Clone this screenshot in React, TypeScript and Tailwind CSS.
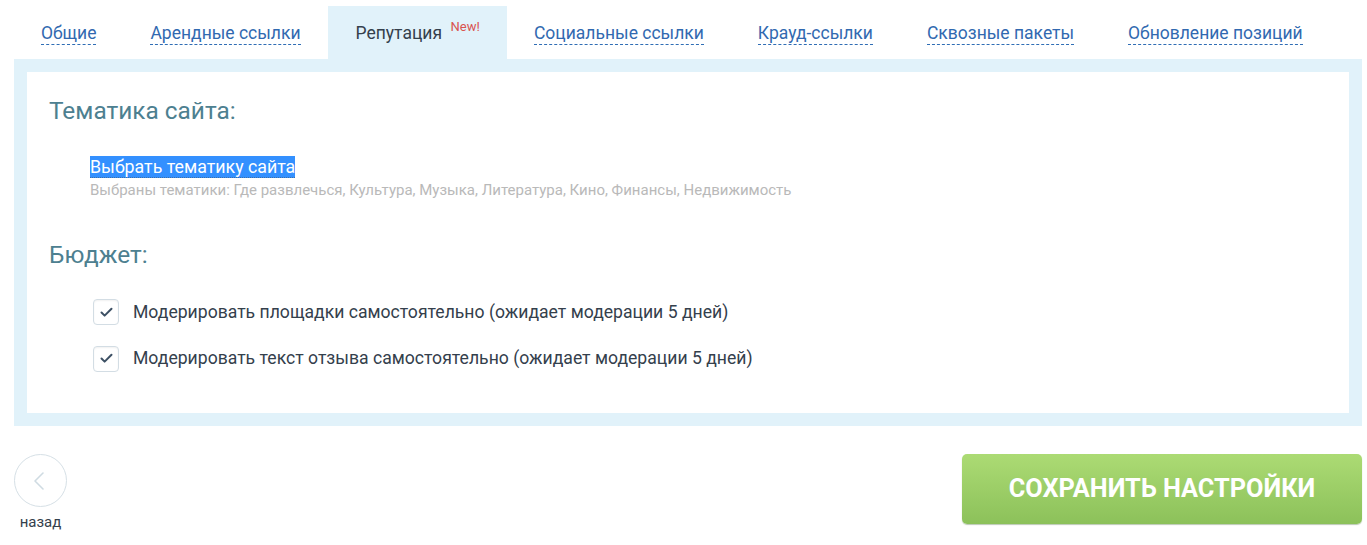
import { Check, ChevronLeft } from 'lucide-react';

const tabs = [
  { label: 'Общие' },
  { label: 'Арендные ссылки' },
  { label: 'Репутация', active: true },
  { label: 'Социальные ссылки' },
  { label: 'Крауд-ссылки' },
  { label: 'Сквозные пакеты' },
  { label: 'Обновление позиций' },
];

const options = [
  'Модерировать площадки самостоятельно (ожидает модерации 5 дней)',
  'Модерировать текст отзыва самостоятельно (ожидает модерации 5 дней)',
];

function Tabs() {
  return (
    <div className="flex h-[53px] items-stretch">
      {tabs.map((t) =>
        t.active ? (
          <div key={t.label} className="relative flex items-center bg-[#e1f2fa] pl-[28px] pr-[65px] pt-[1px]">
            <span className="text-[17.5px] text-[#34404c]">{t.label}</span>
            <span className="absolute left-[123px] top-[11px] text-[13px] text-[#d9534f]">New!</span>
          </div>
        ) : (
          <div key={t.label} className="flex items-center px-[27px] pt-[1px]">
            <span className="border-b border-dashed border-[#2f6db5] leading-[22px] text-[17.5px] text-[#3169b0]">
              {t.label}
            </span>
          </div>
        ),
      )}
    </div>
  );
}

function CheckRow({ text }: { text: string }) {
  return (
    <label className="flex items-center gap-[14px]">
      <span className="flex h-[26px] w-[26px] items-center justify-center rounded-[4px] border border-[#d3dde4] bg-white shadow-[inset_0_1px_2px_rgba(0,0,0,0.06)]">
        <Check size={15} strokeWidth={3.2} className="text-[#3d5064]" />
      </span>
      <span className="text-[17.6px] text-[#34404c]">{text}</span>
    </label>
  );
}

export default function App() {
  return (
    <div className="min-h-[545px] bg-white font-['Roboto',sans-serif]">
      <div className="ml-[14px] w-[1348px] pt-[6px]">
        <Tabs />

        <div className="bg-[#e1f2fa] p-[13px]">
          <div className="h-[341px] bg-white pl-[22px] pt-[24px]">
            <h2 className="text-[24.4px] font-normal leading-[30px] text-[#4d8090]">Тематика сайта:</h2>

            <div className="ml-[41px] mt-[30px]">
              <span className="border-b border-dotted border-[#3d6fa8] bg-[#3390ff] text-[17.8px] leading-[22px] text-white">
                Выбрать тематику сайта
              </span>
              <p className="mt-[0px] text-[15px] leading-[20px] text-[#b9b9b9]">
                Выбраны тематики: Где развлечься, Культура, Музыка, Литература, Кино, Финансы, Недвижимость
              </p>
            </div>

            <h2 className="mt-[40px] text-[24.4px] font-normal leading-[30px] text-[#4d8090]">Бюджет:</h2>

            <div className="ml-[44px] mt-[29px] flex flex-col gap-[20px]">
              {options.map((o) => (
                <CheckRow key={o} text={o} />
              ))}
            </div>
          </div>
        </div>

        <div className="mt-[28px] flex items-start justify-between">
          <div className="flex w-[53px] flex-col items-center">
            <button className="flex h-[53px] w-[53px] items-center justify-center rounded-full border border-[#d6e0e6] bg-white">
              <ChevronLeft size={32} strokeWidth={1.2} className="-ml-[3px] text-[#cfdbe2]" />
            </button>
            <span className="mt-[4px] whitespace-nowrap text-[15px] text-[#34404c]">назад</span>
          </div>

          <button className="h-[70px] w-[400px] rounded-[5px] bg-gradient-to-b from-[#acdb74] to-[#8cc15a] text-[25.3px] font-bold uppercase text-white shadow-[0_1px_1px_rgba(60,100,40,0.35)]">
            Сохранить настройки
          </button>
        </div>
      </div>
    </div>
  );
}
